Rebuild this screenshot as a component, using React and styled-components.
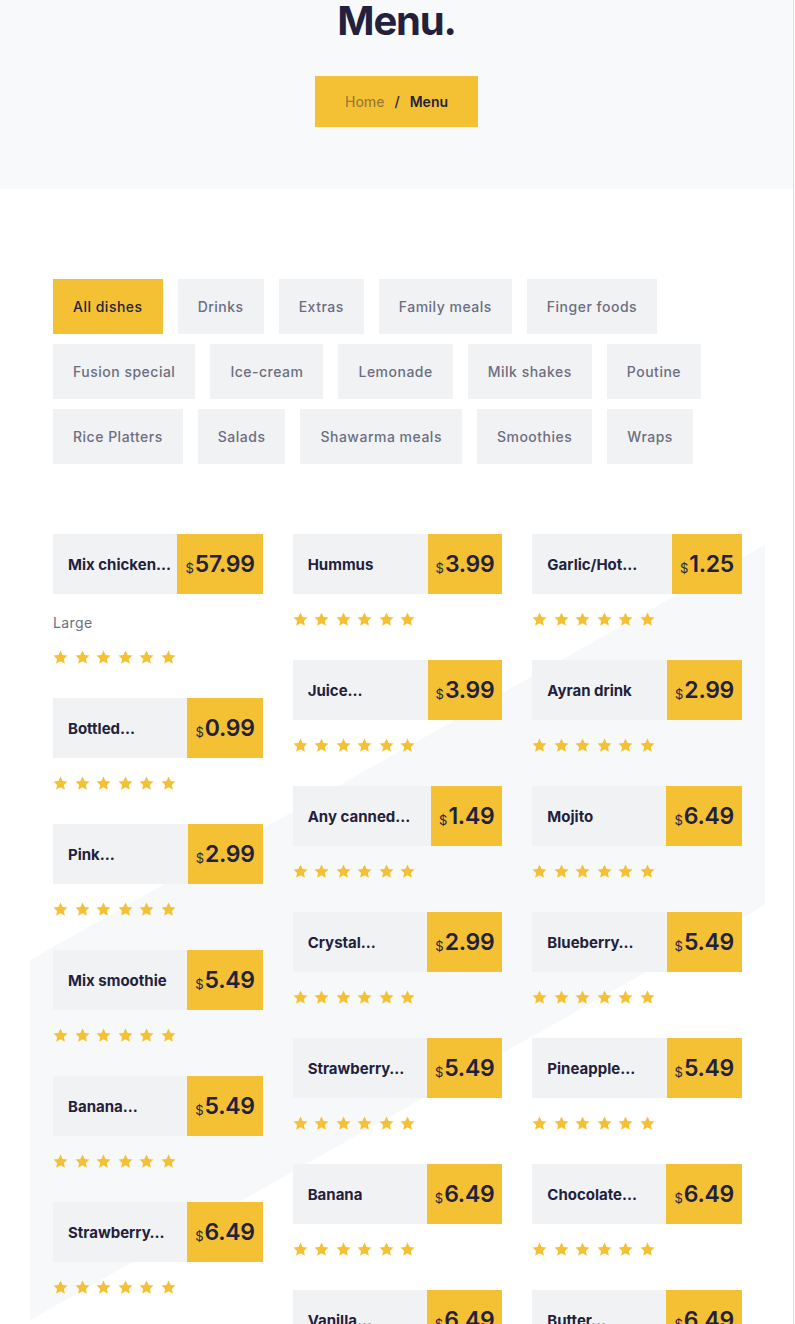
import React from 'react';
import styled, { createGlobalStyle } from 'styled-components';

const GlobalStyle = createGlobalStyle`
  * { box-sizing: border-box; }
  body {
    margin: 0;
    background: #fff;
    font-family: 'Inter', 'Roboto', sans-serif;
  }
`;

const yellow = '#f4c134';
const navy = '#231f3d';

const Page = styled.div`
  margin-right: 1px;
  border-right: 1px solid #dedede;
  min-height: 1324px;
  overflow: hidden;
`;

const Hero = styled.header`
  background: #f8f9fb;
  height: 189px;
  display: flex;
  flex-direction: column;
  align-items: center;
`;

const Title = styled.h1`
  margin: -6px 0 0;
  font-size: 40px;
  line-height: 54px;
  font-weight: 700;
  letter-spacing: -1.2px;
  color: ${navy};
`;

const Crumbs = styled.nav`
  margin-top: 28px;
  height: 51px;
  padding: 0 30px;
  background: ${yellow};
  display: flex;
  align-items: center;
  font-size: 14px;
  font-weight: 500;
`;

const CrumbLink = styled.span`
  color: rgba(35, 31, 61, 0.45);
`;

const Slash = styled.span`
  color: ${navy};
  margin: 0 10px;
`;

const CrumbCurrent = styled.span`
  color: ${navy};
  font-weight: 600;
`;

const Section = styled.section`
  padding: 90px 51px 0 53px;
`;

const Filters = styled.div`
  display: flex;
  flex-wrap: wrap;
  gap: 10px 15px;
  max-width: 670px;
`;

const FilterButton = styled.button`
  border: 0;
  height: 55px;
  padding: 0 20px;
  font-family: inherit;
  font-size: 14px;
  font-weight: 500;
  letter-spacing: 0.5px;
  background: ${(p) => (p.$active ? yellow : '#f1f2f4')};
  color: ${(p) => (p.$active ? navy : '#6c6e7f')};
  cursor: pointer;
`;

const Grid = styled.div`
  position: relative;
  isolation: isolate;
  margin-top: 70px;
  display: grid;
  grid-template-columns: repeat(3, minmax(0, 1fr));
  column-gap: 30px;
  align-items: start;

  &::before {
    content: '';
    position: absolute;
    z-index: -1;
    left: -23px;
    top: 11px;
    width: 735px;
    height: 775px;
    background: #f7f8fa;
    clip-path: polygon(0 415px, 100% 0, 100% 360px, 0 775px);
  }
`;

const Column = styled.div`
  display: flex;
  flex-direction: column;
  min-width: 0;
`;

const Item = styled.article`
  margin-bottom: 34px;
`;

const ItemHead = styled.div`
  display: flex;
  height: 60px;
`;

const Name = styled.h3`
  flex: 1;
  min-width: 0;
  margin: 0;
  padding: 0 6px 0 15px;
  background: #f1f2f4;
  display: flex;
  align-items: center;
  font-size: 15px;
  font-weight: 700;
  color: ${navy};
  white-space: nowrap;
  overflow: hidden;
  text-overflow: ellipsis;
`;

const Price = styled.div`
  flex: none;
  background: ${yellow};
  padding: 0 8px;
  display: flex;
  align-items: center;
  color: ${navy};
`;

const Dollar = styled.span`
  font-size: 13px;
  margin-top: 8px;
  margin-right: 1px;
`;

const Amount = styled.span`
  font-size: 23px;
  font-weight: 600;
  letter-spacing: -0.3px;
`;

const Desc = styled.p`
  margin: 18px 0 16px;
  font-size: 14px;
  line-height: 22px;
  color: #6e6f7d;
  letter-spacing: 0.4px;
`;

const Stars = styled.div`
  display: flex;
  gap: 6.5px;
  margin-top: ${(p) => (p.$afterDesc ? '0' : '18px')};
  height: 14px;
  align-items: center;
`;

const Star = () => (
  <svg width="15" height="15" viewBox="0 0 24 24" fill={yellow}>
    <path d="M12 .8l3.4 7.1 7.8.9-5.8 5.4 1.6 7.8L12 18.1l-7 3.9 1.6-7.8L.8 8.8l7.8-.9z" />
  </svg>
);

const filters = [
  'All dishes', 'Drinks', 'Extras', 'Family meals', 'Finger foods',
  'Fusion special', 'Ice-cream', 'Lemonade', 'Milk shakes', 'Poutine',
  'Rice Platters', 'Salads', 'Shawarma meals', 'Smoothies', 'Wraps',
];

const columns = [
  [
    { name: 'Mix chicken…', price: '57.99', desc: 'Large' },
    { name: 'Bottled…', price: '0.99' },
    { name: 'Pink…', price: '2.99' },
    { name: 'Mix smoothie', price: '5.49' },
    { name: 'Banana…', price: '5.49' },
    { name: 'Strawberry…', price: '6.49' },
  ],
  [
    { name: 'Hummus', price: '3.99' },
    { name: 'Juice…', price: '3.99' },
    { name: 'Any canned…', price: '1.49' },
    { name: 'Crystal…', price: '2.99' },
    { name: 'Strawberry…', price: '5.49' },
    { name: 'Banana', price: '6.49' },
    { name: 'Vanilla…', price: '6.49' },
  ],
  [
    { name: 'Garlic/Hot…', price: '1.25' },
    { name: 'Ayran drink', price: '2.99' },
    { name: 'Mojito', price: '6.49' },
    { name: 'Blueberry…', price: '5.49' },
    { name: 'Pineapple…', price: '5.49' },
    { name: 'Chocolate…', price: '6.49' },
    { name: 'Butter…', price: '6.49' },
  ],
];

const MenuItem = ({ name, price, desc }) => (
  <Item>
    <ItemHead>
      <Name>{name}</Name>
      <Price>
        <Dollar>$</Dollar>
        <Amount>{price}</Amount>
      </Price>
    </ItemHead>
    {desc && <Desc>{desc}</Desc>}
    <Stars $afterDesc={!!desc}>
      {[0, 1, 2, 3, 4, 5].map((i) => (
        <Star key={i} />
      ))}
    </Stars>
  </Item>
);

export default function App() {
  return (
    <Page>
      <GlobalStyle />
      <Hero>
        <Title>Menu.</Title>
        <Crumbs>
          <CrumbLink>Home</CrumbLink>
          <Slash>/</Slash>
          <CrumbCurrent>Menu</CrumbCurrent>
        </Crumbs>
      </Hero>
      <Section>
        <Filters>
          {filters.map((f, i) => (
            <FilterButton key={f} $active={i === 0}>
              {f}
            </FilterButton>
          ))}
        </Filters>
        <Grid>
          {columns.map((col, c) => (
            <Column key={c}>
              {col.map((item, i) => (
                <MenuItem key={i} {...item} />
              ))}
            </Column>
          ))}
        </Grid>
      </Section>
    </Page>
  );
}
